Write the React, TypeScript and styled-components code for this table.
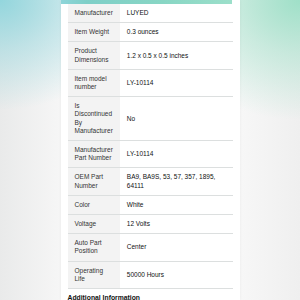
import React from 'react';
import styled, { createGlobalStyle } from 'styled-components';

const GlobalStyle = createGlobalStyle`
  html, body {
    margin: 0;
    padding: 0;
  }
  body {
    width: 300px;
    height: 300px;
    overflow: hidden;
    font-family: "Liberation Sans", Arial, sans-serif;
    background:
      radial-gradient(ellipse 140px 110px at 0% 0%, #93d6dd 0%, rgba(147, 214, 221, 0.5) 45%, rgba(147, 214, 221, 0) 100%),
      radial-gradient(ellipse 150px 120px at 100% 0%, #9fe0c8 0%, rgba(159, 224, 200, 0.5) 45%, rgba(159, 224, 200, 0) 100%),
      linear-gradient(90deg, #e9eaea 0%, #f6f6f6 20%, #f7f7f7 80%, #efefef 100%);
  }
`;

const Page = styled.div`
  width: 300px;
  height: 300px;
  display: flex;
  justify-content: center;
  overflow: hidden;
`;

const Card = styled.div`
  width: 179px;
  background: #ffffff;
  padding: 0 7px;
  box-sizing: border-box;
  box-shadow: 0 0 3px rgba(0, 0, 0, 0.06);
`;

const TopStrip = styled.div`
  height: 4px;
  margin: 0 1px 0 -7px;
  background: linear-gradient(90deg, #8ed5d9 0%, #7fcfc8 15%, #88d6c4 60%, #9cdfca 100%);
`;

const Table = styled.table`
  width: 165px;
  border-collapse: collapse;
  font-size: 6.5px;
  line-height: 8.2px;
`;

const Row = styled.tr`
  border-bottom: 1px solid #dcdfdf;
`;

const Label = styled.th`
  width: 52px;
  box-sizing: border-box;
  background: #f3f3f3;
  color: #333333;
  font-weight: normal;
  text-align: left;
  vertical-align: middle;
  padding: 5px 7px;
`;

const Value = styled.td`
  color: #0f1111;
  vertical-align: middle;
  padding: 5px 7px;
`;

const Heading = styled.div`
  margin-top: 5px;
  font-size: 6.8px;
  font-weight: bold;
  color: #0f1111;
`;

const specs: [string, string][] = [
  ['Manufacturer', 'LUYED'],
  ['Item Weight', '0.3 ounces'],
  ['Product Dimensions', '1.2 x 0.5 x 0.5 inches'],
  ['Item model number', 'LY-10114'],
  ['Is Discontinued By Manufacturer', 'No'],
  ['Manufacturer Part Number', 'LY-10114'],
  ['OEM Part Number', 'BA9, BA9S, 53, 57, 357, 1895, 64111'],
  ['Color', 'White'],
  ['Voltage', '12 Volts'],
  ['Auto Part Position', 'Center'],
  ['Operating Life', '50000 Hours'],
];

export default function App() {
  return (
    <>
      <GlobalStyle />
      <Page>
        <Card>
          <TopStrip />
          <Table>
            <tbody>
              {specs.map(([label, value]) => (
                <Row key={label}>
                  <Label>{label}</Label>
                  <Value>{value}</Value>
                </Row>
              ))}
            </tbody>
          </Table>
          <Heading>Additional Information</Heading>
        </Card>
      </Page>
    </>
  );
}
